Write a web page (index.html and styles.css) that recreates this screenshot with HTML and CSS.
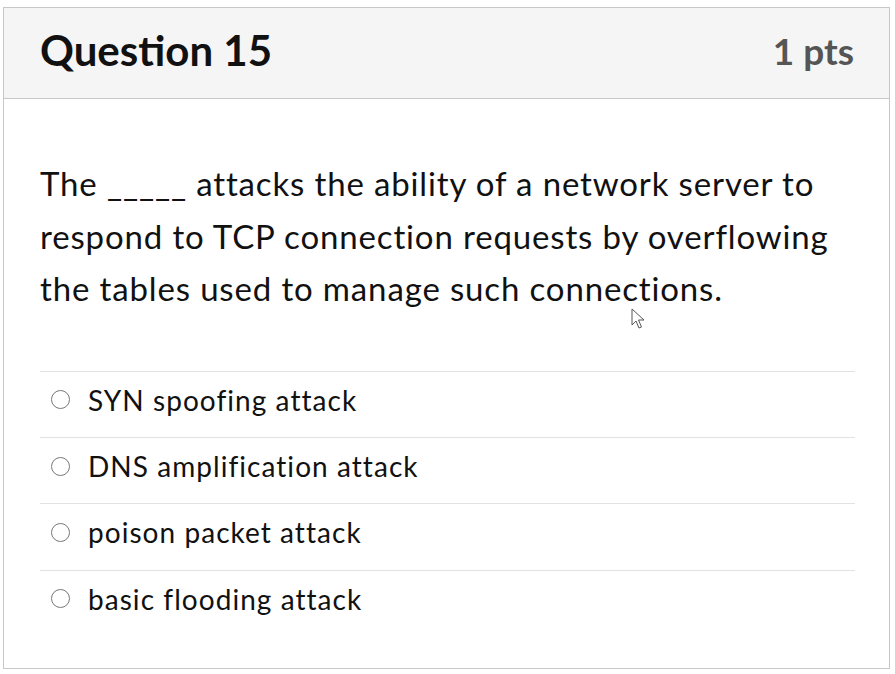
FILE: index.html
```html
<!DOCTYPE html>
<html>
<head>
<meta charset="utf-8">
<link rel="stylesheet" href="styles.css">
</head>
<body>
<div class="card">
  <div class="header">
    <h2 class="title">Question 15</h2>
    <span class="pts">1 pts</span>
  </div>
  <div class="body">
    <p class="question">The _____ attacks the ability of a network server to respond to TCP connection requests by overflowing the tables used to manage such connections.</p>
    <ul class="answers">
      <li class="answer"><span class="radio"></span><span>SYN spoofing attack</span></li>
      <li class="answer"><span class="radio"></span><span>DNS amplification attack</span></li>
      <li class="answer"><span class="radio"></span><span>poison packet attack</span></li>
      <li class="answer"><span class="radio"></span><span>basic flooding attack</span></li>
    </ul>
    <svg class="cursor" width="14" height="22" viewBox="0 0 14 22"><path d="M1 1 L1 17 L5 13 L8 20 L10.5 19 L7.5 12 L13 12 Z" fill="#fff" stroke="#555" stroke-width="1"/></svg>
  </div>
</div>
</body>
</html>
```
FILE: styles.css
```css
html, body { margin: 0; padding: 0; background: #fff; }
body { font-family: Lato, "Open Sans", sans-serif; color: #111; }
.card {
  margin: 7px 3px 0 3px;
  width: 887px;
  height: 662px;
  box-sizing: border-box;
  border: 1px solid #c7c7c7;
  position: relative;
}
.header {
  height: 91px;
  background: #f5f5f5;
  border-bottom: 1px solid #c7c7c7;
  display: flex;
  align-items: center;
  justify-content: space-between;
  padding: 0 35px 6px 36px;
  box-sizing: border-box;
}
.title { margin: 0; font-size: 42px; font-weight: 700; color: #111; }
.pts { font-size: 37px; font-weight: 700; color: #555; }
.body { padding: 58px 34px 0 36px; position: relative; }
.question { margin: 0; font-size: 33px; letter-spacing: 0.85px; line-height: 52.5px; color: #111; }
.answers { list-style: none; margin: 56px 0 0 0; padding: 0; }
.answer {
  border-top: 1px solid #e2e2e2;
  height: 66.4px;
  box-sizing: border-box;
  padding-bottom: 9px;
  display: flex;
  align-items: center;
  font-size: 28px;
  letter-spacing: 1.05px;
  color: #111;
}
.radio {
  width: 17px; height: 17px;
  border: 1.5px solid #777;
  border-radius: 50%;
  margin: 0 18px 0 11px;
  flex: none;
}
.cursor { position: absolute; left: 627px; top: 209px; }
```
